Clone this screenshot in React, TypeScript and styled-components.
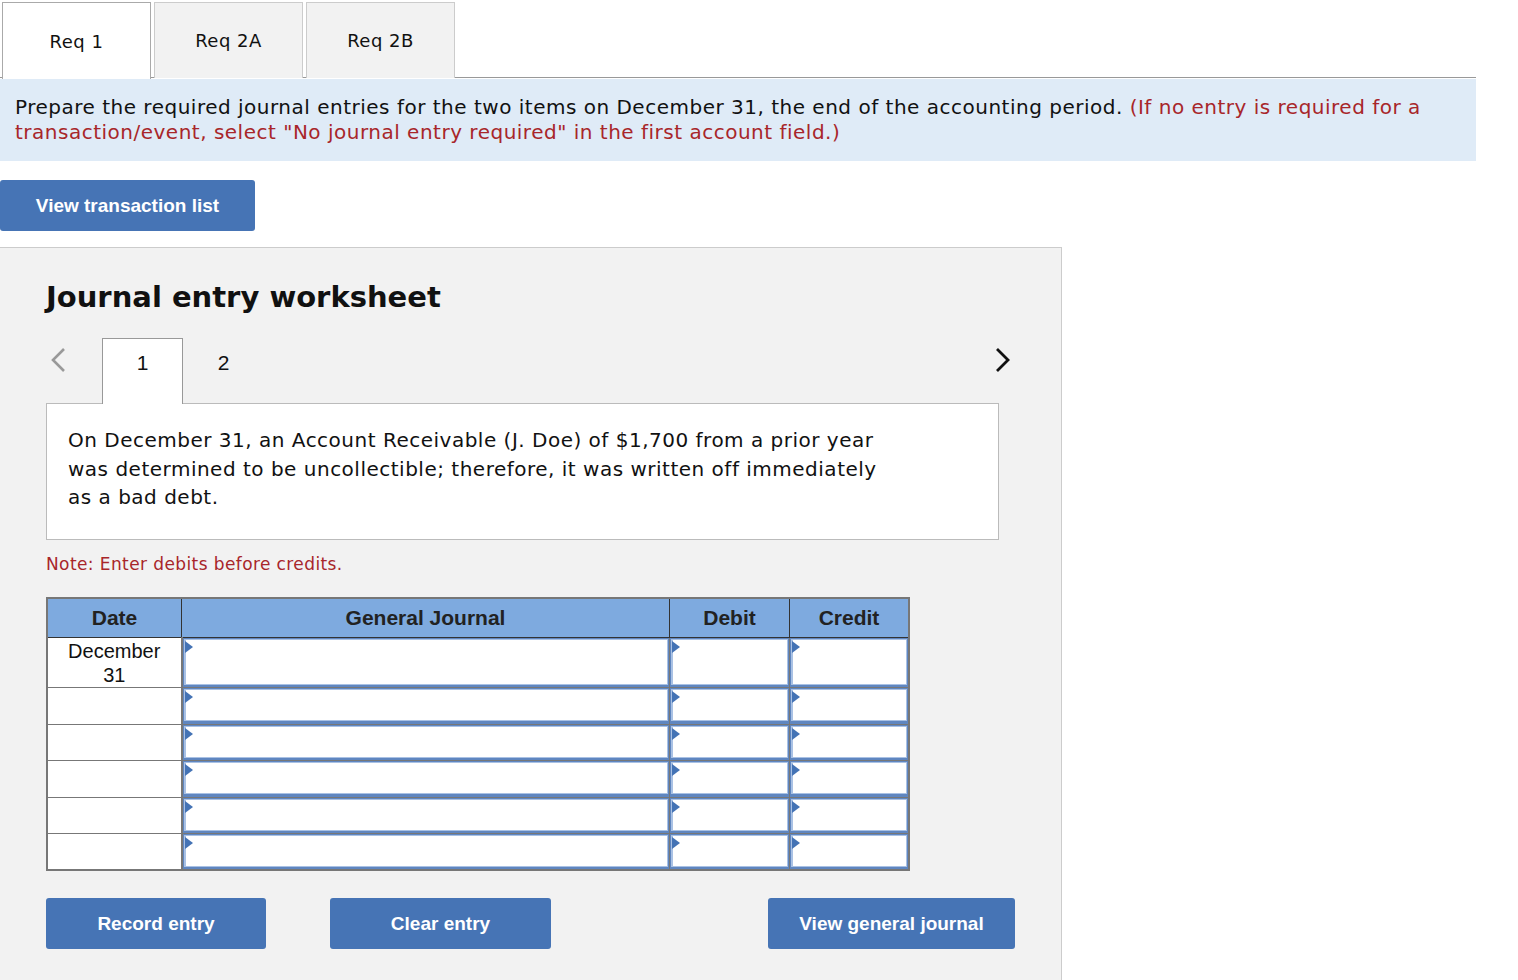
import React from 'react';
import styled, { createGlobalStyle } from 'styled-components';

const GlobalStyle = createGlobalStyle`
  html, body {
    margin: 0;
    padding: 0;
    background: #ffffff;
  }
  body {
    font-family: "DejaVu Sans", Verdana, sans-serif;
    color: #111;
  }
`;

const Page = styled.div`
  width: 1476px;
  min-height: 980px;
  display: flex;
  flex-direction: column;
`;

const TabBar = styled.div`
  display: flex;
  gap: 3px;
  padding: 2px 0 0 2px;
  border-bottom: 1px solid #999;
  height: 75px;
`;

const ReqTab = styled.div<{ $active?: boolean }>`
  width: 147px;
  box-sizing: content-box;
  border: 1px solid ${(p) => (p.$active ? '#aaa' : '#ccc')};
  border-bottom: none;
  background: ${(p) => (p.$active ? '#fff' : '#f2f2f2')};
  margin-bottom: ${(p) => (p.$active ? '-1px' : '0')};
  height: ${(p) => (p.$active ? '76px' : '75px')};
  display: flex;
  align-items: center;
  justify-content: center;
  font-size: 18px;
  letter-spacing: 0.5px;
  color: #111;
`;

const Instructions = styled.div`
  margin-top: 1px;
  background: #dfebf7;
  padding: 16px 15px 16px 15px;
  font-size: 20px;
  letter-spacing: 0.5px;
  line-height: 25px;
  color: #111;
`;

const Red = styled.span`
  color: #a8262a;
`;

const BlueButton = styled.button<{ $width: number }>`
  width: ${(p) => p.$width}px;
  height: 51px;
  background: #4674b5;
  color: #fff;
  border: none;
  border-radius: 3px;
  font-family: "Liberation Sans", Arial, sans-serif;
  font-weight: 700;
  font-size: 19px;
  padding: 0;
  cursor: pointer;
`;

const TopButtonRow = styled.div`
  padding-top: 19px;
  padding-bottom: 16px;
`;

const Panel = styled.div`
  width: 969px;
  flex: 1;
  background: #f2f2f2;
  border-top: 1px solid #ccc;
  border-right: 1px solid #ccc;
  padding: 0 46px;
`;

const Title = styled.h2`
  margin: 31px 0 0 0;
  font-size: 29px;
  font-weight: 700;
  line-height: 36px;
  color: #111;
`;

const EntryNav = styled.div`
  margin-top: 22px;
  display: flex;
  align-items: flex-end;
  height: 66px;
  width: 966px;
`;

const Arrow = styled.div<{ $dim?: boolean; $right?: boolean }>`
  width: 56px;
  height: 46px;
  box-sizing: border-box;
  display: flex;
  align-items: center;
  justify-content: ${(p) => (p.$right ? 'flex-end' : 'flex-start')};
  padding-left: ${(p) => (p.$right ? '0' : '3px')};
  color: ${(p) => (p.$dim ? '#999' : '#111')};
  align-self: flex-start;
`;

const EntryTab = styled.div<{ $active?: boolean }>`
  width: 81px;
  height: 66px;
  box-sizing: border-box;
  display: flex;
  justify-content: center;
  padding-top: 12px;
  font-family: "Liberation Sans", Arial, sans-serif;
  font-size: 21px;
  color: #111;
  background: ${(p) => (p.$active ? '#fff' : 'transparent')};
  border: 1px solid ${(p) => (p.$active ? '#999' : 'transparent')};
  border-bottom: none;
  margin-bottom: -1px;
  position: relative;
  z-index: 1;
`;

const NavSpacer = styled.div`
  flex: 1;
`;

const Description = styled.div`
  width: 953px;
  box-sizing: border-box;
  height: 137px;
  background: #fff;
  border: 1px solid #bbb;
  padding: 22px 21px;
  font-size: 20px;
  letter-spacing: 0.5px;
  line-height: 28.5px;
  color: #111;
`;

const DescText = styled.p`
  margin: 0;
  max-width: 830px;
`;

const Note = styled.div`
  margin-top: 14px;
  font-size: 17px;
  letter-spacing: 0.4px;
  color: #a8262a;
`;

const Table = styled.table`
  margin-top: 23px;
  border-collapse: collapse;
  table-layout: fixed;
  border: 2px solid #777;
  font-family: "Liberation Sans", Arial, sans-serif;
`;

const HeadCell = styled.th<{ $width: number }>`
  width: ${(p) => p.$width}px;
  height: 38px;
  background: #7eaadf;
  border: 1px solid #333;
  border-top: 2px solid #777;
  font-size: 21px;
  font-weight: 700;
  color: #222;
  padding: 0;
`;

const DateCell = styled.td`
  background: #fff;
  border: 1px solid #777;
  border-right: 2px solid #777;
  text-align: center;
  font-size: 20px;
  line-height: 24px;
  color: #111;
  padding: 0;
`;

const InputCell = styled.td`
  padding: 0;
  border: 1px solid #777;
  background: #5f86c0;
`;

const InputBox = styled.div<{ $tall?: boolean }>`
  height: ${(p) => (p.$tall ? '44px' : '30px')};
  margin: 1px 1px 2px 1px;
  background: #fff;
  border: 1px solid #a9c1e4;
  border-width: 1px 1px 1px 2px;
  position: relative;
  &::before {
    content: '';
    position: absolute;
    left: -1px;
    top: 1px;
    border-left: 8px solid #4473b5;
    border-top: 6px solid transparent;
    border-bottom: 6px solid transparent;
  }
`;

const Row = styled.tr<{ $tall?: boolean }>`
  height: ${(p) => (p.$tall ? '50px' : '36.6px')};
`;

const BottomButtons = styled.div`
  margin-top: 27px;
  display: flex;
  width: 969px;
`;

const ButtonGap = styled.div`
  width: 64px;
`;

const ChevronLeft = () => (
  <svg width="18" height="26" viewBox="0 0 18 26">
    <path d="M15 2 L4 13 L15 24" fill="none" stroke="currentColor" strokeWidth="2.6" />
  </svg>
);

const ChevronRight = () => (
  <svg width="18" height="26" viewBox="0 0 18 26">
    <path d="M3 2 L14 13 L3 24" fill="none" stroke="currentColor" strokeWidth="2.8" />
  </svg>
);

const rows = [0, 1, 2, 3, 4, 5];

const App = () => {
  return (
    <Page>
      <GlobalStyle />
      <TabBar>
        <ReqTab $active>Req 1</ReqTab>
        <ReqTab>Req 2A</ReqTab>
        <ReqTab>Req 2B</ReqTab>
      </TabBar>
      <Instructions>
        Prepare the required journal entries for the two items on December 31, the end of the
        accounting period.{' '}
        <Red>
          (If no entry is required for a transaction/event, select "No journal entry required" in
          the first account field.)
        </Red>
      </Instructions>
      <TopButtonRow>
        <BlueButton $width={255}>View transaction list</BlueButton>
      </TopButtonRow>
      <Panel>
        <Title>Journal entry worksheet</Title>
        <EntryNav>
          <Arrow $dim>
            <ChevronLeft />
          </Arrow>
          <EntryTab $active>1</EntryTab>
          <EntryTab>2</EntryTab>
          <NavSpacer />
          <Arrow $right>
            <ChevronRight />
          </Arrow>
        </EntryNav>
        <Description>
          <DescText>
            On December 31, an Account Receivable (J. Doe) of $1,700 from a prior year was
            determined to be uncollectible; therefore, it was written off immediately as a bad debt.
          </DescText>
        </Description>
        <Note>Note: Enter debits before credits.</Note>
        <Table>
          <thead>
            <tr>
              <HeadCell $width={133}>Date</HeadCell>
              <HeadCell $width={487}>General Journal</HeadCell>
              <HeadCell $width={119}>Debit</HeadCell>
              <HeadCell $width={118}>Credit</HeadCell>
            </tr>
          </thead>
          <tbody>
            {rows.map((r) => (
              <Row key={r} $tall={r === 0}>
                <DateCell>
                  {r === 0 ? (
                    <>
                      December
                      <br />
                      31
                    </>
                  ) : null}
                </DateCell>
                <InputCell>
                  <InputBox $tall={r === 0} />
                </InputCell>
                <InputCell>
                  <InputBox $tall={r === 0} />
                </InputCell>
                <InputCell>
                  <InputBox $tall={r === 0} />
                </InputCell>
              </Row>
            ))}
          </tbody>
        </Table>
        <BottomButtons>
          <BlueButton $width={220}>Record entry</BlueButton>
          <ButtonGap />
          <BlueButton $width={221}>Clear entry</BlueButton>
          <NavSpacer />
          <BlueButton $width={247}>View general journal</BlueButton>
        </BottomButtons>
      </Panel>
    </Page>
  );
};

export default App;
